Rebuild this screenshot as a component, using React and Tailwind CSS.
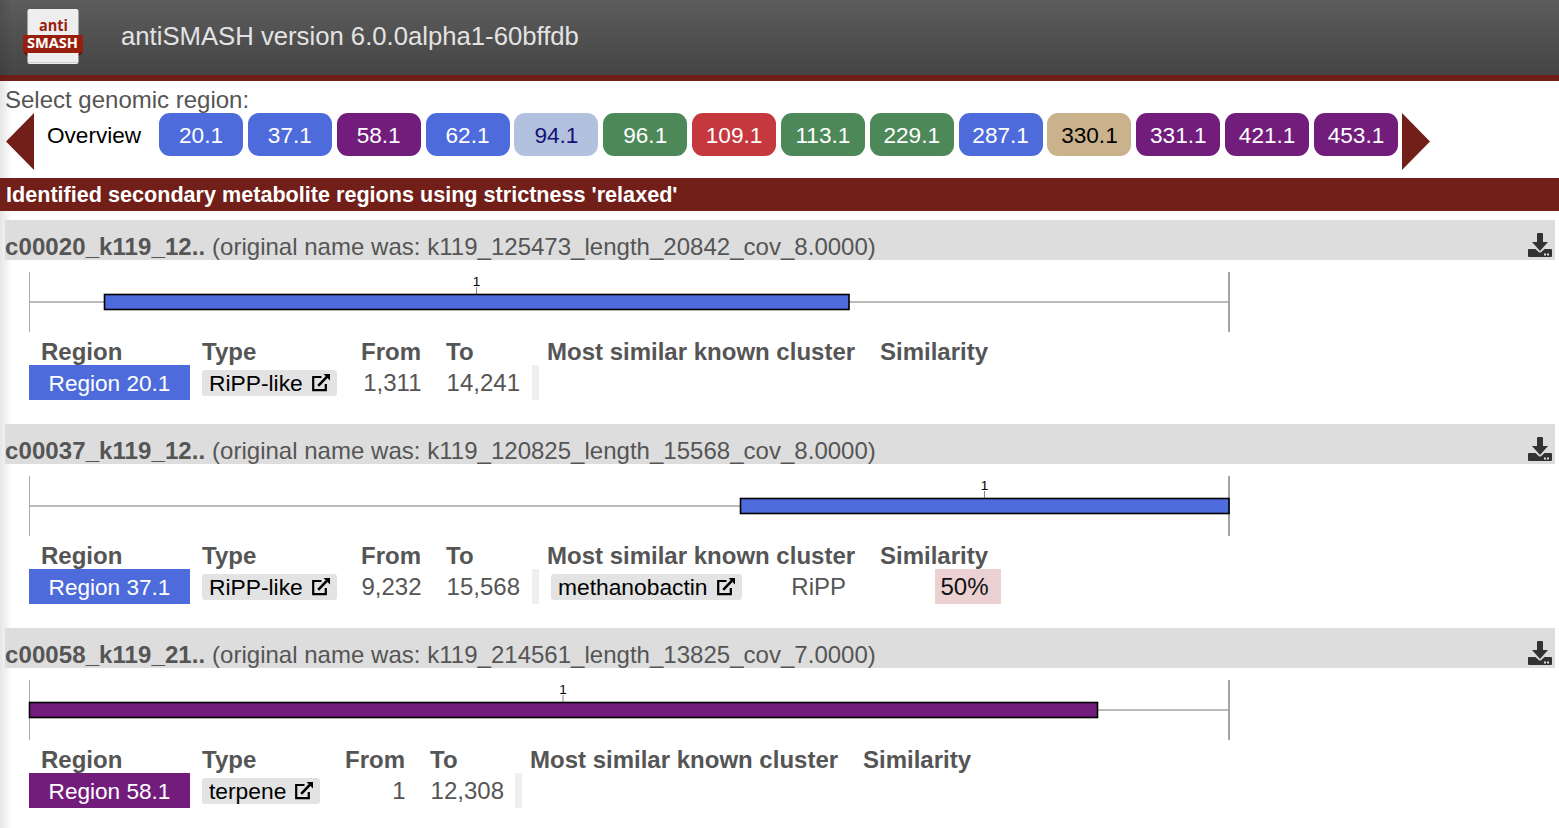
const BLUE = "bg-[#4d6bdb]";
const PURPLE = "bg-[#721d7c]";
const GREEN = "bg-[#4d8859]";

const tabs = [
  ["20.1", BLUE], ["37.1", BLUE], ["58.1", PURPLE], ["62.1", BLUE],
  ["94.1", "bg-[#b2c1dd]", "text-[#131375]"], ["96.1", GREEN], ["109.1", "bg-[#c4383e]"],
  ["113.1", GREEN], ["229.1", GREEN], ["287.1", BLUE],
  ["330.1", "bg-[#cab38c]", "text-black"], ["331.1", PURPLE], ["421.1", PURPLE], ["453.1", PURPLE],
];

const records = [
  { name: "c00020_k119_12..", orig: "k119_125473_length_20842_cov_8.0000", start: 104, end: 849, mid: 476.5, fill: "#4d6bdb", bg: BLUE, region: "Region 20.1", type: "RiPP-like", from: "1,311", to: "14,241" },
  { name: "c00037_k119_12..", orig: "k119_120825_length_15568_cov_8.0000", start: 740, end: 1229, mid: 984.5, fill: "#4d6bdb", bg: BLUE, region: "Region 37.1", type: "RiPP-like", from: "9,232", to: "15,568", known: "methanobactin", kind: "RiPP", sim: "50%" },
  { name: "c00058_k119_21..", orig: "k119_214561_length_13825_cov_7.0000", start: 29, end: 1097.5, mid: 563, fill: "#721d7c", bg: PURPLE, region: "Region 58.1", type: "terpene", from: "1", to: "12,308", narrow: true },
];

function External() {
  return (
    <svg className="ml-[8px] h-5 w-5 shrink-0" viewBox="0 0 20 20">
      <path d="M10.5 4H2.2v13.2h12.6V11" fill="none" stroke="#000" strokeWidth="2.2" />
      <path d="M7.2 12.8L16 3.6" stroke="#000" strokeWidth="2.6" />
      <path d="M12.6 1H19v6.6z" fill="#000" />
    </svg>
  );
}

function Download() {
  return (
    <svg className="h-6 w-6 shrink-0" viewBox="0 0 24 24" fill="#333">
      <path d="M9 1q0-1 1-1h4q1 0 1 1v8h5l-8 9-8-9h5z" />
      <path d="M1 16h6.5l3.5 3.2q1 .8 2 0l3.5-3.2H23q1 0 1 1v6q0 1-1 1H1q-1 0-1-1v-6q0-1 1-1z" />
      <path d="M16 20.5h2v2h-2zM19 20.5h2v2h-2z" fill="#ddd" />
    </svg>
  );
}

function Chip({ children }) {
  return (
    <span className="mt-[5px] flex h-[26px] items-center rounded-[3px] bg-[#e3e3e3] pl-[7px] pr-[6px] text-[22.8px] leading-[26px] text-black">
      {children}
      <External />
    </span>
  );
}

function Record({ r }) {
  const cols = r.narrow
    ? "grid-cols-[173px_143px_85px_100px_333px_200px]"
    : "grid-cols-[173px_159px_85px_101px_333px_200px]";
  return (
    <section className="relative h-[204px]">
      <div className="ml-[5px] mr-1 flex h-10 items-end justify-between bg-[#ddd] pr-[3px]">
        <div className="leading-[27px] whitespace-pre"><b className="tracking-[0.09px]">{r.name}</b><span className="tracking-[0.02px]"> (original name was: {r.orig})</span></div>
        <div className="pb-[3px]"><Download /></div>
      </div>
      <svg className="block h-[72px] w-[1240px]" viewBox="0 260 1240 72">
        <path d="M29.5 272v60" stroke="#aaa" />
        <path d="M1229 272v60" stroke="#a5a5a5" strokeWidth="2" />
        <path d="M29 302H1229" stroke="#a3a3a3" strokeWidth="1.6" />
        <path d={`M${r.mid} 287v7`} stroke="#888" />
        <rect x={r.start + 0.5} y="294.5" width={r.end - r.start - 0.5} height="15" fill={r.fill} stroke="#000" strokeWidth="1.6" />
        <text x={r.mid} y="286" fontSize="13.5" textAnchor="middle" fill="#000">1</text>
      </svg>
      <div className={"ml-[29px] mt-[6px] grid h-[27px] leading-[27px] font-bold whitespace-nowrap " + cols}>
        <span className="pl-[12px]">Region</span>
        <span>Type</span>
        <span>From</span>
        <span>To</span>
        <span>Most similar known cluster</span>
        <span>Similarity</span>
      </div>
      <div className={"ml-[29px] grid h-[35px] grid-rows-[35px] items-start leading-[35px] whitespace-nowrap " + cols}>
        <span className={"mr-3 h-[35px] text-center text-[22.6px] leading-[37px] text-white " + r.bg}>{r.region}</span>
        <span className="flex items-start"><Chip>{r.type}</Chip></span>
        <span className="pr-[24.5px] text-right">{r.from}</span>
        <span className="flex h-[35px] items-start justify-between pr-[8px]"><span className="pl-[0.6px]">{r.to}</span><i className="h-[35px] w-[7px] bg-[#efefef]" /></span>
        <span className="flex items-start justify-between pl-1 pr-[34px]">{r.known && <><Chip>{r.known}</Chip><span>{r.kind}</span></>}</span>
        <span className="flex">{r.sim && <span className="ml-[55px] h-[35px] w-[66px] bg-[#ebd1d1] pl-[5.5px] text-[#111]">{r.sim}</span>}</span>
      </div>
    </section>
  );
}

export default function App() {
  return (
    <div className="relative h-[828px] w-[1559px] overflow-hidden bg-white font-['Liberation_Sans',sans-serif] text-[24px] text-[#555]">
      <div className="pointer-events-none absolute inset-y-0 left-0 w-3 bg-linear-to-r from-black/10 to-transparent" />
      <header className="flex h-[81px] border-b-[6px] border-[#721f1a] bg-linear-to-b from-[#5c5c5c] to-[#454545]">
        <svg className="ml-[18px] mt-1 h-[66px] w-[70px]" viewBox="18 4 70 66">
          <path d="M23 52h60l-4 4H27z" fill="#5d1208" />
          <rect x="27.5" y="9" width="51" height="55" rx="2" fill="#eee" />
          <path d="M28 62.5h50" stroke="#ccc" />
          <path d="M23 35h60v17q-4 1-4.500 1H27.500q-.5 0-4.500-1z" fill="#981f0e" />
          <text x="53.5" y="31" fontFamily="Open Sans" fontWeight="700" fontSize="15.5" textAnchor="middle" fill="#981f0e" textLength="29" lengthAdjust="spacingAndGlyphs">anti</text>
          <text x="52.5" y="48" fontFamily="Open Sans" fontWeight="700" fontSize="14.2" textAnchor="middle" fill="#fff" textLength="51" lengthAdjust="spacingAndGlyphs">SMASH</text>
        </svg>
        <h1 className="ml-[33px] mt-[18px] text-[25.7px] leading-9 text-[#e3e3e3]">antiSMASH version 6.0.0alpha1-60bffdb</h1>
      </header>
      <div className="h-8 pl-[5px] pt-[5px] leading-[27px]">Select genomic region:</div>
      <nav className="relative flex h-[65px] items-start pl-[6px] text-[22.6px]">
        <svg className="h-[57px] w-7 shrink-0" viewBox="0 0 28 57"><path d="M28 0v57L0 28.5z" fill="#721f1a" /></svg>
        <span className="ml-[13px] w-[112px] leading-[46px] text-black">Overview</span>
        <div className="flex gap-[4.85px]">
          {tabs.map(([t, bg, fg]) => (
            <span key={t} className={"h-[43px] w-[84px] rounded-[11px] text-center leading-[46px] " + bg + " " + (fg || "text-white")}>{t}</span>
          ))}
        </div>
        <svg className="ml-1 h-[57px] w-7 shrink-0" viewBox="0 0 28 57"><path d="M0 0v57L28 28.5z" fill="#721f1a" /></svg>
      </nav>
      <div className="relative mb-[9px] h-[33px] bg-[#721f1a] pl-[6px] text-[21.6px] leading-[33px] font-bold text-white">Identified secondary metabolite regions using strictness 'relaxed'</div>
      {records.map((r) => <Record key={r.name} r={r} />)}
    </div>
  );
}
